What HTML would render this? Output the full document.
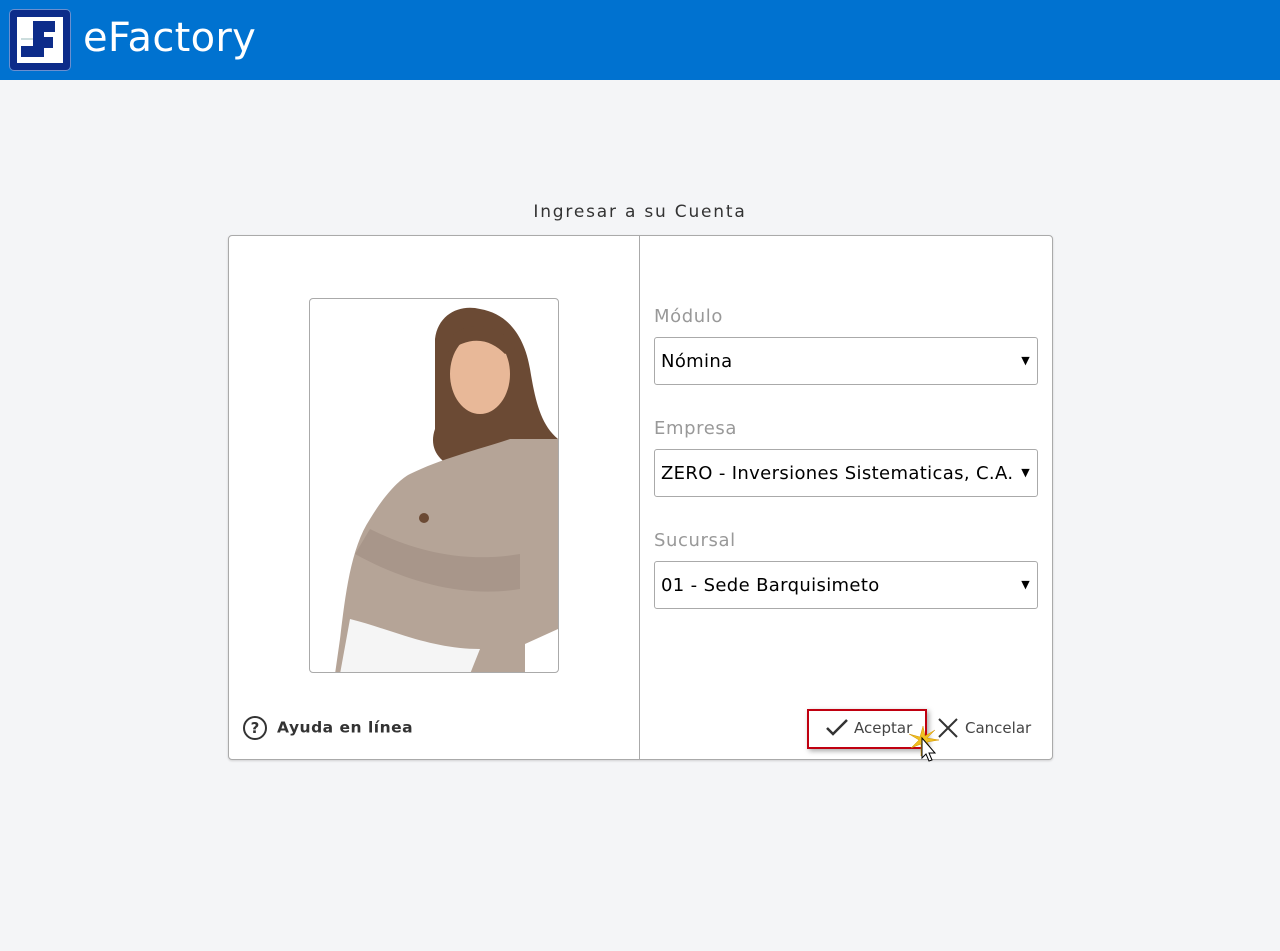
<!DOCTYPE html>
<html><head><meta charset="utf-8"><style>
*{box-sizing:border-box;margin:0;padding:0}
body{width:1280px;height:951px;background:#f4f5f7;font-family:"DejaVu Sans","Liberation Sans",sans-serif;position:relative;overflow:hidden}
.top{position:absolute;left:0;top:0;width:1280px;height:80px;background:#0072d0}
.logo{position:absolute;left:9px;top:9px;width:62px;height:62px;background:#0d2c8a;border-radius:5px;border:1px solid #6a8fd0}
.logo .in{position:absolute;left:7px;top:7px;width:46px;height:46px;background:#fff}
.brand{position:absolute;left:83px;top:15px;color:#fff;font-size:40px;font-family:"DejaVu Sans",sans-serif;letter-spacing:0.3px}
.title{position:absolute;left:0;width:1280px;top:202px;text-align:center;font-size:17px;color:#333;letter-spacing:1.8px}
.card{position:absolute;left:228px;top:235px;width:825px;height:525px;background:#fff;border:1px solid #aaa;border-radius:4px;box-shadow:0 1px 2px rgba(0,0,0,.15)}
.div{position:absolute;left:410px;top:0;width:1px;height:523px;background:#aaa}
.photo{position:absolute;left:80px;top:62px;width:250px;height:375px;border:1px solid #aaa;border-radius:4px;overflow:hidden;background:#fff}
.lbl{position:absolute;left:425px;font-size:18px;color:#999;letter-spacing:0.6px}
.sel{position:absolute;left:425px;width:384px;height:48px;border:1px solid #aaa;border-radius:3px;font-size:18px;color:#000;padding:13px 0 0 6px;letter-spacing:0.35px}
.sel:after{content:"▼";position:absolute;right:7px;top:16px;font-size:11px}
.help{position:absolute;left:14px;top:480px;font-size:15.5px;font-weight:bold;color:#333;letter-spacing:0.5px}
.help .q{display:inline-block;width:24px;height:24px;border:2px solid #333;border-radius:50%;text-align:center;font-size:15px;line-height:20px;vertical-align:middle;margin-right:10px;letter-spacing:0}
.acc{position:absolute;left:578px;top:473px;width:120px;height:40px;border:2px solid #c00010;box-shadow:2px 2px 5px rgba(0,0,0,.35)}
.bt{position:absolute;font-size:15px;color:#444}
</style></head><body>
<div class="top">
<div class="logo"><div class="in">
<svg width="46" height="46" viewBox="0 0 46 46"><path d="M16 4H38V15H27V20H36V31H27V40H4V29H16Z" fill="#0d2c8a"/><path d="M4 22H16" stroke="#9bb" stroke-width="1"/></svg>
</div></div>
<div class="brand">eFactory</div>
</div>
<div class="title">Ingresar a su Cuenta</div>
<div class="card">
<div class="div"></div>
<div class="photo">
<svg width="250" height="375" viewBox="0 0 250 375">
<path d="M125 40 C128 15 150 5 170 10 C200 15 215 40 220 70 C225 100 230 125 248 140 L248 180 L200 175 L150 170 C130 165 118 150 125 130 Z" fill="#6b4a34"/>
<ellipse cx="170" cy="75" rx="30" ry="40" fill="#e8b898"/>
<path d="M135 45 C150 20 190 20 205 50 L195 55 C180 40 160 35 135 55 Z" fill="#6b4a34"/>
<path d="M100 175 C130 160 170 150 200 140 L248 140 L248 330 L215 345 L215 375 L25 375 L30 340 C35 300 40 250 60 220 C75 195 90 180 100 175 Z" fill="#b5a497"/>
<path d="M40 320 C80 330 120 350 170 350 L160 375 L30 375 Z" fill="#f5f5f5"/>
<path d="M60 230 C100 250 150 265 210 255 L210 290 C150 300 90 280 45 255 Z" fill="#a8968a"/>
<circle cx="114" cy="219" r="5" fill="#6b4a34"/>
</svg>
</div>
<div class="lbl" style="top:70px">Módulo</div>
<div class="sel" style="top:101px">Nómina</div>
<div class="lbl" style="top:182px">Empresa</div>
<div class="sel" style="top:213px">ZERO - Inversiones Sistematicas, C.A.</div>
<div class="lbl" style="top:294px">Sucursal</div>
<div class="sel" style="top:325px">01 - Sede Barquisimeto</div>
<div class="help"><span class="q">?</span>Ayuda en línea</div>
<div class="acc"></div>
<svg style="position:absolute;left:596px;top:482px" width="24" height="20" viewBox="0 0 24 20"><path d="M2 10L8 16L22 2" stroke="#333" stroke-width="2.5" fill="none"/></svg>
<div class="bt" style="left:625px;top:483px">Aceptar</div>
<svg style="position:absolute;left:709px;top:482px" width="20" height="20" viewBox="0 0 20 20"><path d="M1 1L19 19M19 1L1 19" stroke="#333" stroke-width="2"/></svg>
<div class="bt" style="left:736px;top:483px">Cancelar</div>
<svg style="position:absolute;left:678px;top:488px" width="40" height="40" viewBox="0 0 40 40"><path d="M16 2L18 12L28 6L20 14L32 16L20 18L26 28L18 20L14 32L14 20L4 24L12 16L2 10L13 13Z" fill="#f0c020" stroke="#d09000" stroke-width=".5"/><path d="M15 14L15 34L19 30L22 37L25 36L22 29L28 29Z" fill="#fff" stroke="#000" stroke-width="1"/></svg>
</div>
</body></html>
